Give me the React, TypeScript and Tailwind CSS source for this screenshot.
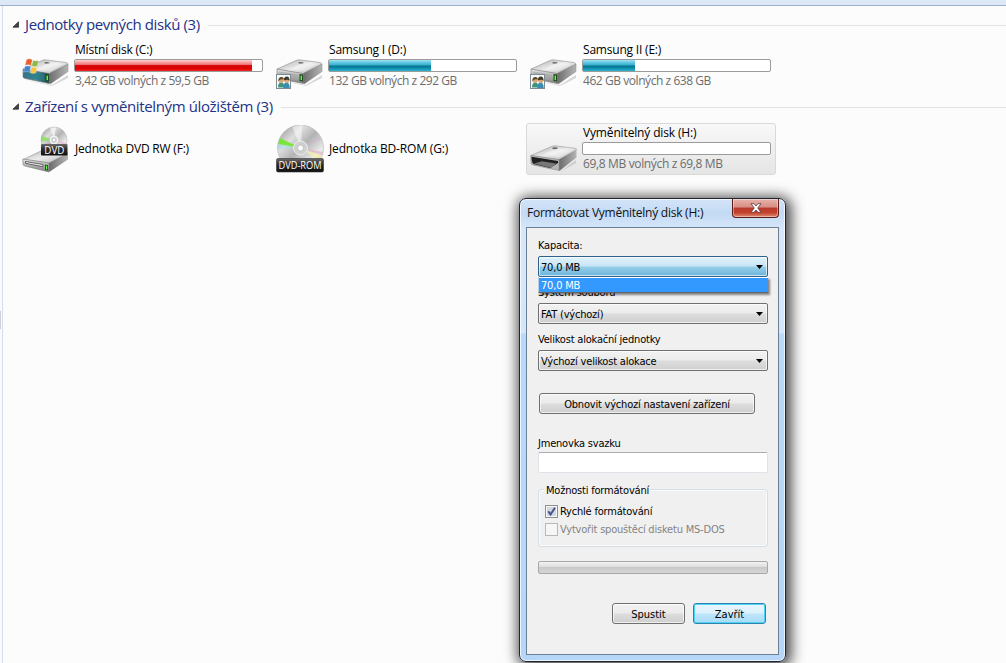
import type { ReactNode } from "react"
import clsx from "clsx"

const drives = [
  { name: "Místní disk (C:)", info: "3,42 GB volných z 59,5 GB", used: 177, full: true, nameCls: "tracking-[-0.2px]", infoCls: "tracking-[-0.42px]", icon: <DriveIcon windows /> },
  { name: "Samsung I (D:)", info: "132 GB volných z 292 GB", used: 102, full: false, nameCls: "tracking-[-0.2px]", infoCls: "tracking-[-0.44px]", icon: <DriveIcon shared /> },
  { name: "Samsung II (E:)", info: "462 GB volných z 638 GB", used: 52, full: false, nameCls: "tracking-[-0.2px]", infoCls: "tracking-[-0.44px]", icon: <DriveIcon shared /> },
]

export default function App() {
  return (
    <div className="relative flex h-[663px] w-[1006px] flex-col overflow-hidden bg-[#fcfcfc] font-['Open_Sans','Noto_Sans',sans-serif] text-[12px] text-black">
      <div className="h-[6px] shrink-0 border-b border-[#9fb0cb] bg-[#dce8f6]" />
      <div className="flex flex-1">
        <div className="flex w-[3px] items-center border-r border-[#d6dcf0]">
          <div className="mb-[29px] h-[18px] w-px bg-[#d0d0d0]" />
        </div>
        <main className="flex-1 pt-1 pl-[9px]">
          <GroupHeader className="h-[30px] tracking-[-0.4px]">Jednotky pevných disků (3)</GroupHeader>
          <div className="flex gap-1 pl-[6px]">
            {drives.map((d) => (
              <Tile key={d.name} icon={d.icon}>
                <DriveText {...d} />
              </Tile>
            ))}
          </div>

          <GroupHeader className="h-[31px] tracking-[-0.37px]">Zařízení s vyměnitelným úložištěm (3)</GroupHeader>
          <div className="flex gap-1 pl-[6px]">
            <Tile icon={<DvdDriveIcon />}>
              <p className="pt-[15px] pl-px leading-[18px] tracking-[-0.2px]">Jednotka DVD RW (F:)</p>
            </Tile>
            <Tile icon={<DiscIcon />}>
              <p className="pt-[15px] pl-px leading-[18px] tracking-[-0.15px]">Jednotka BD-ROM (G:)</p>
            </Tile>
            <Tile icon={<RemovableIcon />} selected>
              <DriveText name="Vyměnitelný disk (H:)" info="69,8 MB volných z 69,8 MB" used={0} nameCls="tracking-[-0.15px]" infoCls="tracking-[-0.35px]" />
            </Tile>
          </div>
        </main>
      </div>

      <FormatDialog />
    </div>
  )
}

function GroupHeader({ children, className }: { children: ReactNode; className?: string }) {
  return (
    <div className={clsx("flex items-center text-[15px] text-[#1e3287]", className)}>
      <svg width="7" height="7" viewBox="0 0 7 7" className="mr-[6px] mb-[2px]">
        <path d="M6.5 0.8v5.400h-5.600z" fill="#444" stroke="#222" strokeWidth="0.7" />
      </svg>
      <h2 className="mb-[2px] whitespace-nowrap">{children}</h2>
      <div className="ml-2 h-px flex-1 bg-[#e2e2e6]" />
    </div>
  )
}

function Tile({ icon, children, selected }: { icon: ReactNode; children: ReactNode; selected?: boolean }) {
  return (
    <div
      className={clsx(
        "flex h-[52px] w-[250px] rounded-[3px] border pt-px pl-[3px]",
        selected ? "border-[#d9d9d9] bg-linear-to-b from-[#f8f8f8] to-[#e5e5e5]" : "border-transparent"
      )}
    >
      {icon}
      <div className="ml-1 whitespace-nowrap">{children}</div>
    </div>
  )
}

function DriveText({ name, info, used, full, nameCls, infoCls }: { name: string; info: string; used: number; full?: boolean; nameCls: string; infoCls: string }) {
  return (
    <>
      <p className={clsx("mb-[2px] pl-px leading-[15px]", nameCls)}>{name}</p>
      <div className="h-[13px] w-[189px] rounded-[2px] border border-[#9b9b9b] bg-white">
        <div
          className={clsx(
            "h-full",
            full
              ? "bg-[linear-gradient(#ffd0d0_0%,#f59a9a_25%,#ef6a6a_45%,#d40d10_50%,#dc0000_75%,#ef2626_100%)]"
              : "bg-[linear-gradient(#9fe2f2_0%,#5cc6e0_25%,#36acc9_48%,#05738f_52%,#0b86a4_70%,#2bb3d0_100%)]"
          )}
          style={{ width: used }}
        />
      </div>
      <p className={clsx("pl-px leading-[18px] text-[#6d6d6d]", infoCls)}>{info}</p>
    </>
  )
}

function FormatDialog() {
  return (
    <div className="absolute top-[198px] left-[519px] h-[464px] w-[267px] rounded-[7px] border border-[#1d2733] bg-[linear-gradient(#d3e4f8_0px,#c3daf4_14px,#d6e7fa_30px,#d3e6fb_134px,#b9d9fa_135px,#b5d6f8_100%)] font-['DejaVu_Sans_Condensed','DejaVu_Sans',sans-serif] text-[11px] tracking-[-0.2px] shadow-[2px_2px_14px_3px_rgba(0,0,0,0.75),inset_0_0_0_1px_rgba(255,255,255,0.75)]">
      <div className="flex h-[28px] justify-between pr-[6px] pl-[7px]">
        <h1 className="pt-[5px] font-['Open_Sans','Noto_Sans',sans-serif] text-[12px] leading-[18px] tracking-[-0.25px] whitespace-nowrap text-[#111]">Formátovat Vyměnitelný disk (H:)</h1>
        <button className="flex h-[19px] w-[47px] items-center justify-center rounded-b-[4px] border border-t-0 border-[#5a1d1a] bg-[linear-gradient(#e8b3aa_0%,#d78e85_45%,#b8392c_50%,#c3422f_75%,#dd8a70_100%)] shadow-[inset_0_0_0_1px_rgba(255,255,255,0.4)]">
          <svg width="12" height="10" viewBox="0 0 12 10">
            <path d="M1 0.7h3L6 3l2-2.3h3L7.7 5 11 9.3H8L6 7 4 9.3H1L4.3 5z" fill="#fff" stroke="#5b3a3c" strokeWidth="0.8" />
          </svg>
        </button>
      </div>

      <div className="mx-[6px] h-[428px] border border-[#6d7f93] bg-[#f0f0f0] pr-[10px] pl-[11px] whitespace-nowrap">
        <p className="pt-[9px] leading-[18px]">Kapacita:</p>
        <div className="relative mt-px">
          <Combo open>70,0 MB</Combo>
          <div className="absolute top-[21px] left-0 h-[16px] w-[230px] border-b border-l border-[#646464] border-l-[#b8cfe6] bg-white shadow-[2px_2px_2px_rgba(0,0,0,0.45)]">
            <p className="mt-px h-[14px] bg-[#3399ff] pl-[2px] leading-[15px] text-white">70,0 MB</p>
          </div>
        </div>
        <p className="pt-[7px] leading-[18px]">Systém souborů</p>
        <div className="mt-px">
          <Combo>FAT (výchozí)</Combo>
        </div>
        <p className="pt-[7px] leading-[18px]">Velikost alokační jednotky</p>
        <div className="mt-px">
          <Combo>Výchozí velikost alokace</Combo>
        </div>
        <Button className="mt-[22px] ml-px w-[216px]">Obnovit výchozí nastavení zařízení</Button>

        <p className="pt-[21px] leading-[17px]">Jmenovka svazku</p>
        <div className="h-[21px] rounded-[2px] border border-[#e2e3ea] border-t-[#abadb3] bg-white" />

        <fieldset className="relative mt-[16px] h-[58px] rounded-[3px] border border-[#d5dfe5] pt-[13px] pl-[6px] shadow-[inset_0_0_0_1px_#fafafa]">
          <span className="absolute top-[-8px] left-[5px] bg-[#f0f0f0] px-[2px] leading-[17px]">Možnosti formátování</span>
          <Check checked>Rychlé formátování</Check>
          <Check>Vytvořit spouštěcí disketu MS-DOS</Check>
        </fieldset>

        <div className="mt-[14px] h-[13px] rounded-[2px] border border-[#a8a8a8] bg-[linear-gradient(#f2f2f2_0%,#dedede_45%,#c9c9c9_50%,#d6d6d6_100%)]" />
        <div className="mt-[29px] flex justify-end gap-2 pr-[2px]">
          <Button className="w-[73px] tracking-normal">Spustit</Button>
          <Button className="w-[73px] tracking-normal" primary>Zavřít</Button>
        </div>
      </div>
    </div>
  )
}

function Combo({ children, open }: { children: ReactNode; open?: boolean }) {
  return (
    <div
      className={clsx(
        "flex h-[21px] w-[230px] items-center justify-between rounded-[2px] border pr-[4px] pl-[2px] shadow-[inset_0_0_0_1px_rgba(255,255,255,0.65)]",
        open
          ? "border-[#2c628b] bg-[linear-gradient(#e1f2fb_0%,#c7e5f6_48%,#98cfea_52%,#6ab4da_100%)]"
          : "border-[#707070] bg-[linear-gradient(#f2f2f2_0%,#ebebeb_48%,#dddddd_52%,#cfcfcf_100%)]"
      )}
    >
      <span className="pt-[2px] leading-[17px]">{children}</span>
      <svg width="7" height="4" viewBox="0 0 7 4">
        <path d="M0 0h7L3.5 4z" fill="#000" />
      </svg>
    </div>
  )
}

function Button({ children, className, primary }: { children: ReactNode; className?: string; primary?: boolean }) {
  return (
    <button
      className={clsx(
        "block h-[21px] rounded-[3px] border pt-[2px] leading-[17px]",
        primary
          ? "border-[#2f84ad] bg-[linear-gradient(#e9f6fd_0%,#dcf1fc_48%,#bfe6fb_52%,#a9dcf6_100%)] shadow-[inset_0_0_0_1px_#4fd2f7]"
          : "border-[#707070] bg-[linear-gradient(#f2f2f2_0%,#ebebeb_48%,#dddddd_52%,#cfcfcf_100%)] shadow-[inset_0_0_0_1px_rgba(255,255,255,0.65)]",
        className
      )}
    >
      {children}
    </button>
  )
}

function Check({ children, checked }: { children: ReactNode; checked?: boolean }) {
  return (
    <label className={clsx("flex h-[18px] items-center gap-[2px]", !checked && "text-[#838383]")}>
      <span className={clsx("mb-px flex size-[13px] items-center justify-center border bg-[#f6f6f6]", checked ? "border-[#8e8f8f]" : "border-[#b8b8b8]")}>
        {checked && (
          <svg width="11" height="11" viewBox="0 0 11 11">
            <rect x="1" y="1" width="9" height="9" fill="#d3d8df" />
            <path d="M2.3 5.2 4.5 8.5 9 1.8" fill="none" stroke="#42538f" strokeWidth="2" />
          </svg>
        )}
      </span>
      <span className="pt-px">{children}</span>
    </label>
  )
}

/* Icons */

function Gradients() {
  return (
    <defs>
      <linearGradient id="top" x1="0" y1="0" x2="1" y2="1">
        <stop offset="0" stopColor="#a9a9a9" />
        <stop offset="0.5" stopColor="#ececec" />
        <stop offset="1" stopColor="#b0b0b0" />
      </linearGradient>
      <linearGradient id="side" x1="0" y1="0" x2="1" y2="0">
        <stop offset="0" stopColor="#6c6c6c" />
        <stop offset="1" stopColor="#b5b5b5" />
      </linearGradient>
      <linearGradient id="front" x1="0" y1="0" x2="0" y2="1">
        <stop offset="0" stopColor="#e6e6e6" />
        <stop offset="1" stopColor="#7c7c7c" />
      </linearGradient>
      <linearGradient id="glass" x1="0" y1="0" x2="1" y2="0">
        <stop offset="0" stopColor="#3c6f87" />
        <stop offset="0.5" stopColor="#3f8c96" />
        <stop offset="1" stopColor="#1c4a52" />
      </linearGradient>
      <linearGradient id="label" x1="0" y1="0" x2="0" y2="1">
        <stop offset="0" stopColor="#6a6a6a" />
        <stop offset="0.5" stopColor="#262626" />
        <stop offset="1" stopColor="#111" />
      </linearGradient>
      <linearGradient id="disc" x1="0" y1="0" x2="1" y2="1">
        <stop offset="0" stopColor="#8e8e8e" />
        <stop offset="0.3" stopColor="#dedede" />
        <stop offset="0.5" stopColor="#b3b3b3" />
        <stop offset="0.75" stopColor="#ececec" />
        <stop offset="1" stopColor="#a5a5a5" />
      </linearGradient>
    </defs>
  )
}

function DriveIcon({ windows, shared }: { windows?: boolean; shared?: boolean }) {
  return (
    <svg width="48" height="48" viewBox="0 0 48 48" className="shrink-0">
      <Gradients />
      <path d="M3 38 30 43 46 33v3L30 44z" fill="#000" opacity="0.15" />
      <path d="M1 27 20 18.5q2-.9 4-.6l20 2.600q2 .5 1.700 2L27 32 2 28z" fill="url(#top)" stroke="#8e8e8e" strokeWidth="0.6" />
      <path d="M27 31.500 46 22v7.500L29 41.500q-1.500.7-2-.5z" fill="url(#side)" stroke="#8b8b8b" strokeWidth="0.5" />
      <path d="M1 27 27 31.500v10L3 36.500q-2-.5-2-2z" fill={windows ? "url(#glass)" : "url(#front)"} stroke="#777" strokeWidth="0.6" />
      <path d="M3 29.500 22 32.500v6L4 35z" fill={windows ? "#2b7b88" : "#a5a5a5"} opacity="0.6" />
      <path d="m23.500 32 3.500.5v7l-3.500-.5z" fill="#1d4a1d" />
      <path d="m24.600 33.500 1.400.2v4.500l-1.400-.2z" fill="#5dff45" />
      <ellipse cx="25" cy="20.800" rx="2.800" ry="0.900" fill="#666" />
      <path d="M15 27 27 20l14 2-13 7z" fill="#fff" opacity="0.3" />
      {windows && (
        <g stroke="#fff" strokeWidth="0.3">
          <path d="M4.500 17.500q3-1.500 5.800.3l-1.200 5.700q-3-1.700-6 0z" fill="#e8602c" />
          <path d="M11 18.200q3 1.300 5.500 0l-1.200 5.800q-3 1.200-5.500-.2z" fill="#8cb846" />
          <path d="M2.800 24.500q3-1.500 6 .2l-1.300 5.500q-3-1.600-6 0z" fill="#3f86d0" />
          <path d="M9.500 25q3 1.400 5.600.1l-1.300 5.700q-3 1.300-5.500-.1z" fill="#fcc33c" />
        </g>
      )}
      {shared && (
        <g>
          <rect x="0.500" y="32.500" width="14" height="14" fill="#f4fbfd" stroke="#7c8c92" />
          <path d="M2 45.500q0-5 3.200-5t3.200 5z" fill="#3f9480" />
          <circle cx="5.200" cy="38.500" r="2.500" fill="#d9a878" />
          <path d="M2.300 39.500q-.2-4.500 3.100-4.500 2.600 0 2.500 2.500-3-.6-4.400.6z" fill="#5c451f" />
          <path d="M7.300 46q0-5.500 3.200-5.500t3.200 5.500z" fill="#3a8fb0" />
          <circle cx="10.800" cy="38.500" r="2.500" fill="#d9a878" />
          <path d="M7.900 38.500q0-4 2.900-4 3 0 2.700 4.500-.8-2-5.600-.5z" fill="#3f3825" />
        </g>
      )}
    </svg>
  )
}

function RemovableIcon() {
  return (
    <svg width="48" height="48" viewBox="0 0 48 48" className="shrink-0">
      <Gradients />
      <path d="M3 41 30 47 46 35v3L30 47z" fill="#000" opacity="0.12" />
      <path d="M1 30.500 22 21.300q2-.6 4-.4l19 2.400q1.500.3 1.500 1.500L30 35 1 31z" fill="url(#top)" stroke="#999" strokeWidth="0.6" />
      <path d="M29 34.500 46.500 24.500v8L30 45.500q-1 .5-1-.5z" fill="url(#side)" />
      <path d="M.8 30.300 29 34.500v11L3 40q-2-.5-2-2z" fill="#b5b5b5" stroke="#8a8a8a" strokeWidth="0.6" />
      <path d="M1.500 31.800 28 36v2L20 43 3.500 39q-2-1.500-2-7.200z" fill="#202020" />
      <path d="M4 38.500 12 36.300l14 2.200-5 4.500z" fill="#777" />
      <ellipse cx="25" cy="23.300" rx="2.800" ry="1" fill="#666" />
      <path d="m14 28.500 13-5 15 2-13 7z" fill="#fff" opacity="0.35" />
    </svg>
  )
}

function DvdDriveIcon() {
  return (
    <svg width="48" height="48" viewBox="0 0 48 48" className="shrink-0">
      <Gradients />
      <path d="M1 34.500 21 25l25 3-19 10z" fill="url(#top)" stroke="#999" strokeWidth="0.6" />
      <path d="M27 38 46 28v6.500L28 46.500q-1 .5-1-.5z" fill="url(#side)" />
      <path d="M.8 34 27 38v9L3 41q-2-.5-2-2z" fill="url(#front)" stroke="#777" strokeWidth="0.6" />
      <path d="m3.500 36.500 17.500 3v2.200l-17.500-3.400z" fill="#f3f3f3" stroke="#444" strokeWidth="0.8" />
      <path d="m23 39.500 3 .5v5.500l-3-.6z" fill="#1d4a1d" />
      <path d="m23.900 40.500 1.300.2v3.800l-1.300-.2z" fill="#5dff45" />
      <circle cx="32" cy="15" r="13" fill="url(#disc)" stroke="#aaa" strokeWidth="0.5" />
      <path d="m32 15-12.500-4-.3 5.500z" fill="#7be04a" opacity="0.7" />
      <path d="M32 15 28 2.500h6z" fill="#fff" opacity="0.6" />
      <path d="m32 15 12.500 3-1 2.500z" fill="#e7b7d2" opacity="0.7" />
      <circle cx="32" cy="15" r="4" fill="#dcdcdc" stroke="#fff" strokeWidth="0.8" />
      <circle cx="32" cy="15" r="1.700" fill="#fff" stroke="#aaa" strokeWidth="0.5" />
      <rect x="19" y="19" width="26.500" height="11.500" rx="1" fill="url(#label)" />
      <text x="32.300" y="28.500" textAnchor="middle" textLength="20" lengthAdjust="spacingAndGlyphs" fontSize="10" letterSpacing="0" fill="#fff" fontFamily="Open Sans">DVD</text>
    </svg>
  )
}

function DiscIcon() {
  return (
    <svg width="48" height="48" viewBox="0 0 48 48" className="shrink-0">
      <Gradients />
      <circle cx="24.500" cy="23" r="23" fill="url(#disc)" stroke="#aaa" strokeWidth="0.5" />
      <path d="M24.500 23 4 13l-1.800 6z" fill="#72e52e" opacity="0.9" />
      <path d="m24.500 23-22.200-4-.5 5z" fill="#9fe0e8" opacity="0.5" />
      <path d="m24.500 23-8-21q5-2 10-2z" fill="#fff" opacity="0.5" />
      <path d="m24.500 23 20-11 1 2z" fill="#d9a9d6" opacity="0.5" />
      <path d="m24.500 23 22 8-3 5z" fill="#f5f0a0" opacity="0.7" />
      <path d="m24.500 23 22.300 4-.8 3z" fill="#e5a8c4" opacity="0.6" />
      <circle cx="24.500" cy="23" r="7" fill="#d0d0d0" stroke="#eee" />
      <circle cx="24.500" cy="23" r="3" fill="#fafafa" stroke="#aaa" strokeWidth="0.6" />
      <rect x="0.500" y="33.500" width="47" height="13.500" rx="1.500" fill="url(#label)" stroke="#333" strokeWidth="0.6" />
      <text x="24" y="43.500" textAnchor="middle" textLength="43" lengthAdjust="spacingAndGlyphs" fontSize="10" fill="#fff" fontFamily="Open Sans">DVD-ROM</text>
    </svg>
  )
}
